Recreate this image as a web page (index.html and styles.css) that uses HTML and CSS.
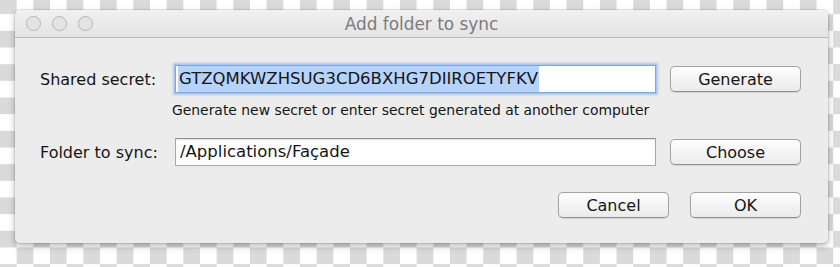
FILE: index.html
```html
<!DOCTYPE html>
<html lang="en">
<head>
    <meta charset="UTF-8">
    <title>Add folder to sync</title>
    <link rel="stylesheet" href="styles.css">
</head>
<body>
    <div class="window">
        <div class="titlebar">
            <div class="lights">
                <span class="light"></span>
                <span class="light"></span>
                <span class="light"></span>
            </div>
            <div class="title">Add folder to sync</div>
            <div></div>
        </div>

        <div class="content">
            <div class="form">
                <label class="label">Shared secret:</label>
                <div class="field focused"><span class="selected">GTZQMKWZHSUG3CD6BXHG7DIIROETYFKV</span></div>
                <button class="btn">Generate</button>

                <div></div>
                <div class="hint">Generate new secret or enter secret generated at another computer</div>
                <div></div>

                <label class="label">Folder to sync:</label>
                <div class="field">/Applications/Façade</div>
                <button class="btn">Choose</button>
            </div>

            <div class="actions">
                <button class="btn small">Cancel</button>
                <button class="btn small">OK</button>
            </div>
        </div>
    </div>
</body>
</html>
```

FILE: styles.css
```css
html, body {
    margin: 0;
    height: 100%;
}
body {
    padding: 10px 0 0 15px;
    box-sizing: border-box;
    font-family: "DejaVu Sans", Verdana, sans-serif;
    color: #151515;
    background-color: #fff;
    background-image: conic-gradient(#fff 25%, #dadada 0 50%, #fff 0 75%, #dadada 0);
    background-size: 33.33px 33.33px;
    background-position: 0 -2.5px;
}
.window {
    width: 813px;
    height: 233px;
    background: #ececec;
    border-radius: 5px;
    box-shadow: 0 0 0 1px rgba(0,0,0,0.08), 0 3px 7px rgba(0,0,0,0.28);
    overflow: hidden;
}
.titlebar {
    height: 27px;
    border-bottom: 1px solid #b9b9b9;
    background: linear-gradient(#f1f1f1, #e3e3e3);
    display: grid;
    grid-template-columns: 1fr auto 1fr;
    align-items: center;
}
.lights {
    display: flex;
    gap: 11px;
    padding-left: 11px;
}
.light {
    width: 13px;
    height: 13px;
    border: 1.5px solid #b6b6b6;
    border-radius: 50%;
    background: #e4e4e4;
}
.title {
    font-size: 16.9px;
    color: #7c7c7c;
    padding-top: 1px;
}
.content {
    padding: 27px 27px 0 25px;
}
.form {
    display: grid;
    grid-template-columns: 121px 481px 131px;
    column-gap: 14px;
    align-items: center;
}
.label {
    font-size: 16px;
    white-space: nowrap;
}
.field {
    height: 26px;
    border: 1px solid #a8a8a8;
    border-top-color: #949494;
    background: #fff;
    box-shadow: inset 0 1px 1px rgba(0,0,0,0.12);
    font-size: 16.5px;
    line-height: 26px;
    padding-left: 4px;
    white-space: nowrap;
    overflow: hidden;
}
.field.focused {
    border-color: #7fa6da;
    box-shadow: 0 0 0 1px #a9c6ee, 0 0 2px 2px rgba(120,165,225,0.5);
    padding-left: 2px;
}
.selected {
    display: inline-block;
    background: #b5d3fb;
    padding: 0 1px;
}
.hint {
    font-size: 13.9px;
    margin: 8px 0 19px -3px;
    line-height: 18px;
    white-space: nowrap;
}
.btn {
    height: 26px;
    width: 131px;
    padding: 0;
    border: 1px solid #a2a2a2;
    border-bottom-color: #8e8e8e;
    border-radius: 5px;
    background: linear-gradient(#fefefe, #f4f4f4 50%, #ebebeb);
    box-shadow: 0 1px 1px rgba(0,0,0,0.1);
    font-family: inherit;
    font-size: 16px;
    color: #151515;
}
.actions {
    display: flex;
    justify-content: flex-end;
    gap: 21px;
    margin-top: 26px;
}
.btn.small {
    width: 111px;
}
```
